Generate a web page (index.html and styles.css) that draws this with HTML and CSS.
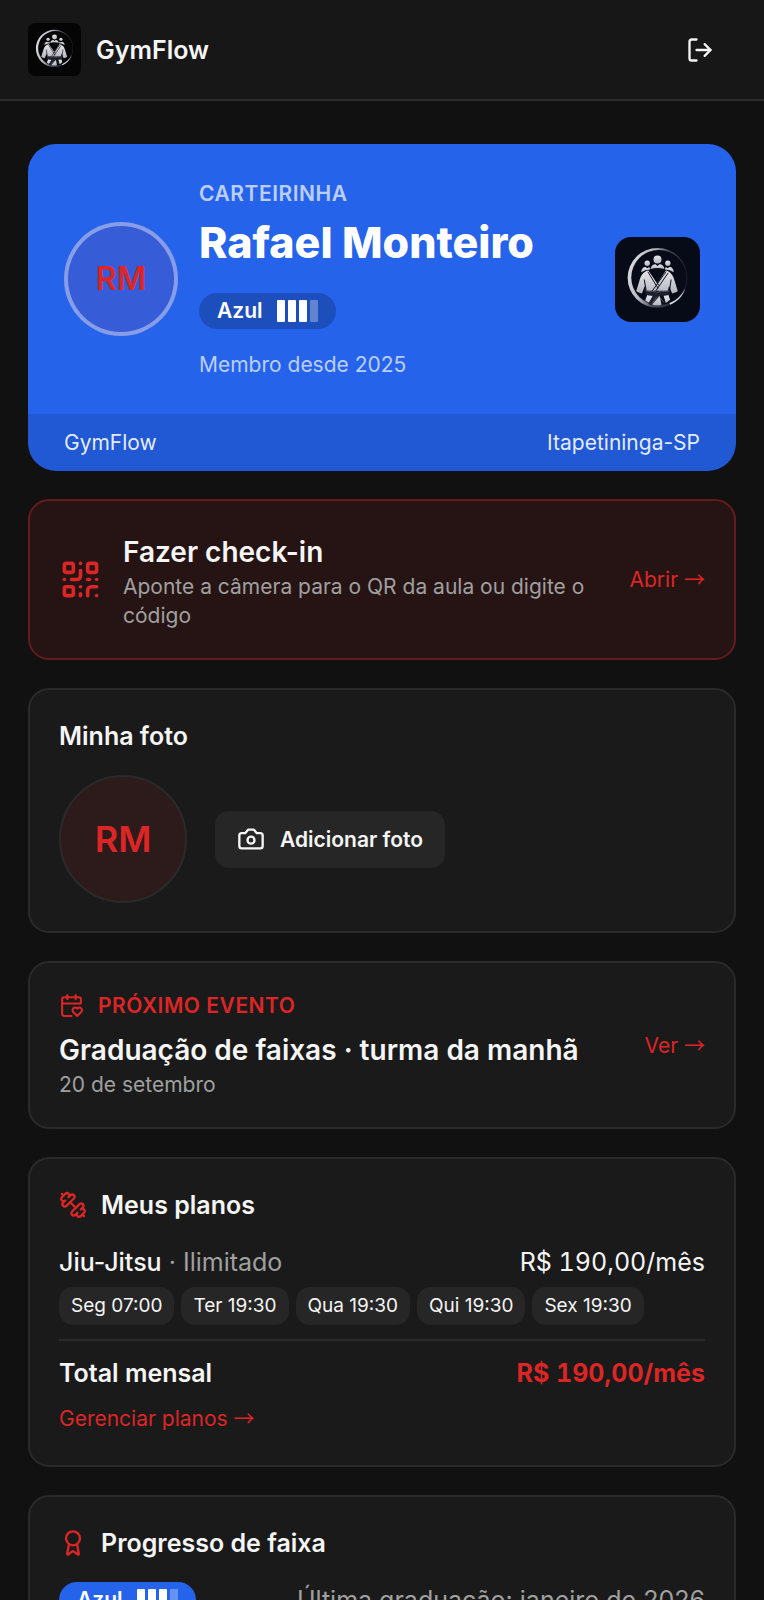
FILE: index.html
```html
<!DOCTYPE html>
<html lang="pt-BR">
<head>
<meta charset="utf-8">
<meta name="viewport" content="width=device-width, initial-scale=1">
<title>GymFlow</title>
<link rel="stylesheet" href="styles.css">
</head>
<body>
<svg class="defs" width="0" height="0" aria-hidden="true">
  <defs>
    <linearGradient id="ring" x1="0" y1="0" x2="1" y2="0.3">
      <stop offset="0" stop-color="#e8e9ee"/>
      <stop offset="0.4" stop-color="#b4b6c0"/>
      <stop offset="0.65" stop-color="#4a4d59"/>
      <stop offset="1" stop-color="#1c202b"/>
    </linearGradient>
    <linearGradient id="gi" x1="0" y1="0" x2="0" y2="1">
      <stop offset="0" stop-color="#e6e7ec"/>
      <stop offset="1" stop-color="#b3b5be"/>
    </linearGradient>
    <symbol id="crest" viewBox="0 0 256 256">
      <path fill="url(#ring)" fill-rule="evenodd" d="M128 33a90 90 0 1 0 0 180a90 90 0 1 0 0-180zM132 39a83 83 0 1 1 0 166a83 83 0 1 1 0-166z"/>
      <path fill="#d9dbe2" d="M212 155c-8 23-24 40-46 49l-2-5c21-8 36-23 48-44z"/>
      <g fill="url(#gi)">
        <circle cx="128" cy="68" r="12"/>
        <circle cx="97" cy="79" r="8"/>
        <circle cx="159" cy="79" r="8"/>
        <path d="M107 96c1-9 8-14 15-14l6 5 6-5c7 0 14 5 15 14q-21-6-42 0z"/>
        <path d="M79 106c0-10 6-16 13-16l5 4 6-4 3 8q-15 0-27 8z"/>
        <path d="M177 106c0-10-6-16-13-16l-5 4-6-4-3 8q15 0 27 8z"/>
        <path d="M100 101c-16 4-22 16-26 29l-10 33c5 4 10 6 17 7l9-23 3 15h66l4-15 9 23c7-1 12-3 17-7l-10-33c-4-13-10-25-26-29l-25 38z"/>
        <path d="M97 175l17 1-11 23-12-8zM122 178h13l5 26q-14 4-28-1zM146 176l15-1 5 14-13 10z"/>
      </g>
      <path fill="none" stroke="#0b0e19" stroke-width="3" d="M104 102l28 44M99 105l31 50M154 104l-43 60M160 108l-39 57M88 128l6 34M169 128l-5 34"/>
      <path fill="#1c202b" d="M92 161q36 8 73 0v13q-18 4-30 3l-26 29-9-5 15-24q-12 0-23-3z"/>
      <path fill="none" stroke="#6d707c" stroke-width="2" d="M93 162q35 8 71 0M132 178l16 20M126 180l-16 22"/>
    </symbol>
  </defs>
</svg>

<header class="topbar">
  <a class="brand" href="#inicio">
    <svg class="brand-logo" aria-hidden="true"><use href="#crest"/></svg>
    <span>GymFlow</span>
  </a>
  <button class="icon-button" type="button" aria-label="Sair">
    <svg class="icon icon-md" viewBox="0 0 24 24" aria-hidden="true"><path d="M9 21H5a2 2 0 0 1-2-2V5a2 2 0 0 1 2-2h4"/><path d="m16 17 5-5-5-5"/><path d="M21 12H9"/></svg>
  </button>
</header>

<main class="content">
  <section class="member">
    <div class="member-main">
      <div class="avatar avatar-member">RM</div>
      <div class="member-info">
        <p class="member-eyebrow">CARTEIRINHA</p>
        <h1 class="member-name">Rafael Monteiro</h1>
        <span class="belt belt-shade">Azul <span class="degrees"><i></i><i></i><i></i><i class="off"></i></span></span>
        <p class="member-since">Membro desde 2025</p>
      </div>
      <svg class="member-logo" aria-hidden="true"><use href="#crest"/></svg>
    </div>
    <div class="member-footer"><span>GymFlow</span><span>Itapetininga-SP</span></div>
  </section>

  <a class="card card-accent row-card" href="#checkin">
    <svg class="icon icon-lg red" viewBox="0 0 24 24" aria-hidden="true"><rect width="5" height="5" x="3" y="3" rx="1"/><rect width="5" height="5" x="16" y="3" rx="1"/><rect width="5" height="5" x="3" y="16" rx="1"/><path d="M21 16h-3a2 2 0 0 0-2 2v3"/><path d="M21 21v.01"/><path d="M12 7v3a2 2 0 0 1-2 2H7"/><path d="M3 12h.01"/><path d="M12 3h.01"/><path d="M12 16v.01"/><path d="M16 12h1"/><path d="M21 12v.01"/><path d="M12 21v-1"/></svg>
    <div class="grow">
      <h2 class="heading">Fazer check-in</h2>
      <p class="muted small">Aponte a câmera para o QR da aula ou digite o código</p>
    </div>
    <span class="small red">Abrir <span class="arrow">→</span></span>
  </a>

  <section class="card photo">
    <h2 class="title">Minha foto</h2>
    <div class="photo-row">
      <div class="avatar avatar-photo">RM</div>
      <button class="button" type="button">
        <svg class="icon icon-md" viewBox="0 0 24 24" aria-hidden="true"><path d="M14.5 4h-5L7 7H4a2 2 0 0 0-2 2v9a2 2 0 0 0 2 2h16a2 2 0 0 0 2-2V9a2 2 0 0 0-2-2h-3l-2.500-3z"/><circle cx="12" cy="13" r="3"/></svg>
        Adicionar foto
      </button>
    </div>
  </section>

  <a class="card row-card" href="#evento">
    <div class="grow">
      <p class="event-eyebrow">
        <svg class="icon icon-sm" viewBox="0 0 24 24" aria-hidden="true"><path d="M3 10h18V6a2 2 0 0 0-2-2H5a2 2 0 0 0-2 2v14a2 2 0 0 0 2 2h7"/><path d="M8 2v4"/><path d="M16 2v4"/><path d="M21.290 14.700a2.430 2.430 0 0 0-2.650-.52c-.3.120-.57.300-.8.530l-.34.340-.35-.34a2.430 2.430 0 0 0-2.650-.53c-.3.120-.56.300-.79.530-.95.940-1 2.530.200 3.740L17.500 22l3.600-3.550c1.200-1.210 1.140-2.800.190-3.740Z"/></svg>
        PRÓXIMO EVENTO
      </p>
      <h2 class="heading">Graduação de faixas · turma da manhã</h2>
      <p class="muted small">20 de setembro</p>
    </div>
    <span class="small red">Ver <span class="arrow">→</span></span>
  </a>

  <section class="card">
    <h2 class="title with-icon">
      <svg class="icon icon-md red" viewBox="0 0 24 24" aria-hidden="true"><path d="M14.400 14.400 9.600 9.600"/><path d="M18.657 21.485a2 2 0 1 1-2.829-2.828l-1.767 1.768a2 2 0 1 1-2.829-2.829l6.364-6.364a2 2 0 1 1 2.829 2.829l-1.768 1.767a2 2 0 1 1 2.828 2.829z"/><path d="m21.500 21.500-1.400-1.400"/><path d="M3.900 3.900 2.500 2.500"/><path d="M6.404 12.768a2 2 0 1 1-2.829-2.829l1.768-1.767a2 2 0 1 1-2.828-2.829l2.828-2.828a2 2 0 1 1 2.829 2.828l1.767-1.768a2 2 0 1 1 2.829 2.829z"/></svg>
      Meus planos
    </h2>
    <div class="split plan">
      <p><span class="medium">Jiu-Jitsu</span> <span class="muted">· Ilimitado</span></p>
      <p class="amount">R$ 190,00/mês</p>
    </div>
    <ul class="chips">
      <li>Seg 07:00</li><li>Ter 19:30</li><li>Qua 19:30</li><li>Qui 19:30</li><li>Sex 19:30</li>
    </ul>
    <div class="split total">
      <p>Total mensal</p>
      <p class="amount total-value">R$ 190,00/mês</p>
    </div>
    <p class="manage"><a class="small red" href="#planos">Gerenciar planos <span class="arrow">→</span></a></p>
  </section>

  <section class="card">
    <h2 class="title with-icon">
      <svg class="icon icon-md red" viewBox="0 0 24 24" aria-hidden="true"><path d="m15.477 12.890 1.515 8.526a.5.5 0 0 1-.81.470l-3.580-2.687a1 1 0 0 0-1.197 0l-3.586 2.686a.5.5 0 0 1-.81-.469l1.514-8.526"/><circle cx="12" cy="8" r="6"/></svg>
      Progresso de faixa
    </h2>
    <div class="split progress">
      <span class="belt belt-blue">Azul <span class="degrees"><i></i><i></i><i></i><i class="off"></i></span></span>
      <p class="muted">Última graduação: janeiro de 2026</p>
    </div>
  </section>
</main>
</body>
</html>
```
FILE: styles.css
```css
*, *::before, *::after { box-sizing: border-box; }

:root {
  --bg: #111111;
  --card: #1a1a1a;
  --line: #2a2a2a;
  --chip: #262626;
  --text: #f5f5f5;
  --muted: #a0a0a0;
  --red: #dc2626;
  --blue: #2563eb;
}

html { scrollbar-width: none; }

body {
  margin: 0;
  background: var(--bg);
  color: var(--text);
  font-family: Inter, "Liberation Sans", sans-serif;
  font-size: 25px;
  line-height: 36px;
}

h1, h2, p, ul { margin: 0; padding: 0; font-size: inherit; font-weight: inherit; }
a { color: inherit; text-decoration: none; }
button { border: 0; font: inherit; color: inherit; cursor: pointer; }

.defs { position: absolute; }

.icon {
  flex: none;
  fill: none;
  stroke: currentColor;
  stroke-width: 2;
  stroke-linecap: round;
  stroke-linejoin: round;
}
.icon-sm { width: 25px; height: 25px; }
.icon-md { width: 28px; height: 28px; }
.icon-lg { width: 43px; height: 43px; }

.red { color: var(--red); }
.muted { color: var(--muted); }
.medium { font-weight: 500; }
.small { font-size: 21px; line-height: 29px; }
.arrow { font-family: "Noto Sans CJK SC", sans-serif; line-height: 1; }
.grow { flex: 1; min-width: 0; }

.topbar {
  display: flex;
  align-items: center;
  justify-content: space-between;
  padding: 23px 28px;
  background: #171717;
  border-bottom: 2px solid var(--line);
}
.brand { display: flex; align-items: center; gap: 15px; font-weight: 600; }
.brand-logo { width: 53px; height: 53px; border-radius: 7px; background: #050505; }
.icon-button { display: flex; padding: 12px 22px; background: none; }

.content { display: flex; flex-direction: column; gap: 28px; padding: 43px 28px 28px; }

.member { overflow: hidden; border-radius: 28px; background: var(--blue); color: #ffffff; }
.member-main { display: flex; align-items: center; gap: 21px; padding: 35px 36px; }
.member-info { flex: 1; min-width: 0; display: flex; flex-direction: column; align-items: flex-start; }
.member-eyebrow { font-size: 21px; line-height: 29px; font-weight: 600; letter-spacing: 0.025em; color: rgba(255, 255, 255, 0.7); }
.member-name { margin: 7px 0 24px; font-size: 43px; line-height: 54px; font-weight: 800; }
.member-since { margin-top: 21px; font-size: 21px; line-height: 29px; color: rgba(255, 255, 255, 0.7); }
.member-logo { flex: none; width: 85px; height: 85px; border-radius: 16px; background: #070b17; }
.member-footer {
  display: flex;
  justify-content: space-between;
  padding: 14px 36px;
  background: rgba(0, 0, 0, 0.1);
  font-size: 21px;
  line-height: 29px;
  color: rgba(255, 255, 255, 0.9);
}

.avatar {
  flex: none;
  display: grid;
  place-items: center;
  border-radius: 50%;
  background: rgba(220, 38, 38, 0.1);
  color: var(--red);
  font-weight: 600;
}
.avatar-member { width: 114px; height: 114px; border: 4px solid rgba(255, 255, 255, 0.4); font-size: 32px; }
.avatar-photo { width: 128px; height: 128px; border: 2px solid var(--line); font-size: 36px; }

.belt {
  display: inline-flex;
  align-items: center;
  gap: 14px;
  height: 36px;
  padding: 0 18px;
  border-radius: 18px;
  font-size: 21px;
  font-weight: 600;
  color: #ffffff;
}
.belt-shade { background: rgba(0, 0, 0, 0.2); }
.belt-blue { background: var(--blue); }
.degrees { display: flex; gap: 3px; }
.degrees i { width: 8px; height: 22px; border-radius: 1px; background: #ffffff; }
.degrees .off { background: rgba(255, 255, 255, 0.3); }

.card { padding: 28px 29px; border: 2px solid var(--line); border-radius: 21px; background: var(--card); }
.card-accent { border-color: #641b1e; background: #261313; }
.row-card { display: flex; align-items: center; gap: 21px; }
.heading { padding-top: 3px; font-size: 28px; line-height: 40px; font-weight: 600; }
.title { font-weight: 600; }
.with-icon { display: flex; align-items: center; gap: 14px; }

.photo-row { display: flex; align-items: center; gap: 28px; margin-top: 21px; }
.button {
  display: inline-flex;
  align-items: center;
  gap: 15px;
  padding: 14px 22px;
  border-radius: 14px;
  background: var(--chip);
  font-size: 21px;
  line-height: 29px;
  font-weight: 600;
}

.event-eyebrow {
  display: flex;
  align-items: center;
  gap: 14px;
  margin-bottom: 7px;
  font-size: 21px;
  line-height: 29px;
  font-weight: 600;
  letter-spacing: 0.025em;
  color: var(--red);
}

.split { display: flex; align-items: center; justify-content: space-between; gap: 14px; }
.plan { margin-top: 21px; }
.amount { font-variant-numeric: tabular-nums; }
.chips { display: flex; flex-wrap: wrap; gap: 7px; margin-top: 7px; list-style: none; }
.chips li { padding: 4px 12px; border-radius: 14px; background: var(--chip); font-size: 19px; line-height: 30px; }
.total { margin-top: 14px; padding-top: 14px; border-top: 2px solid var(--line); font-weight: 600; }
.total-value { font-weight: 700; color: var(--red); }
.manage { margin-top: 9px; padding-bottom: 2px; line-height: 35px; }
.progress { margin-top: 21px; }
```
